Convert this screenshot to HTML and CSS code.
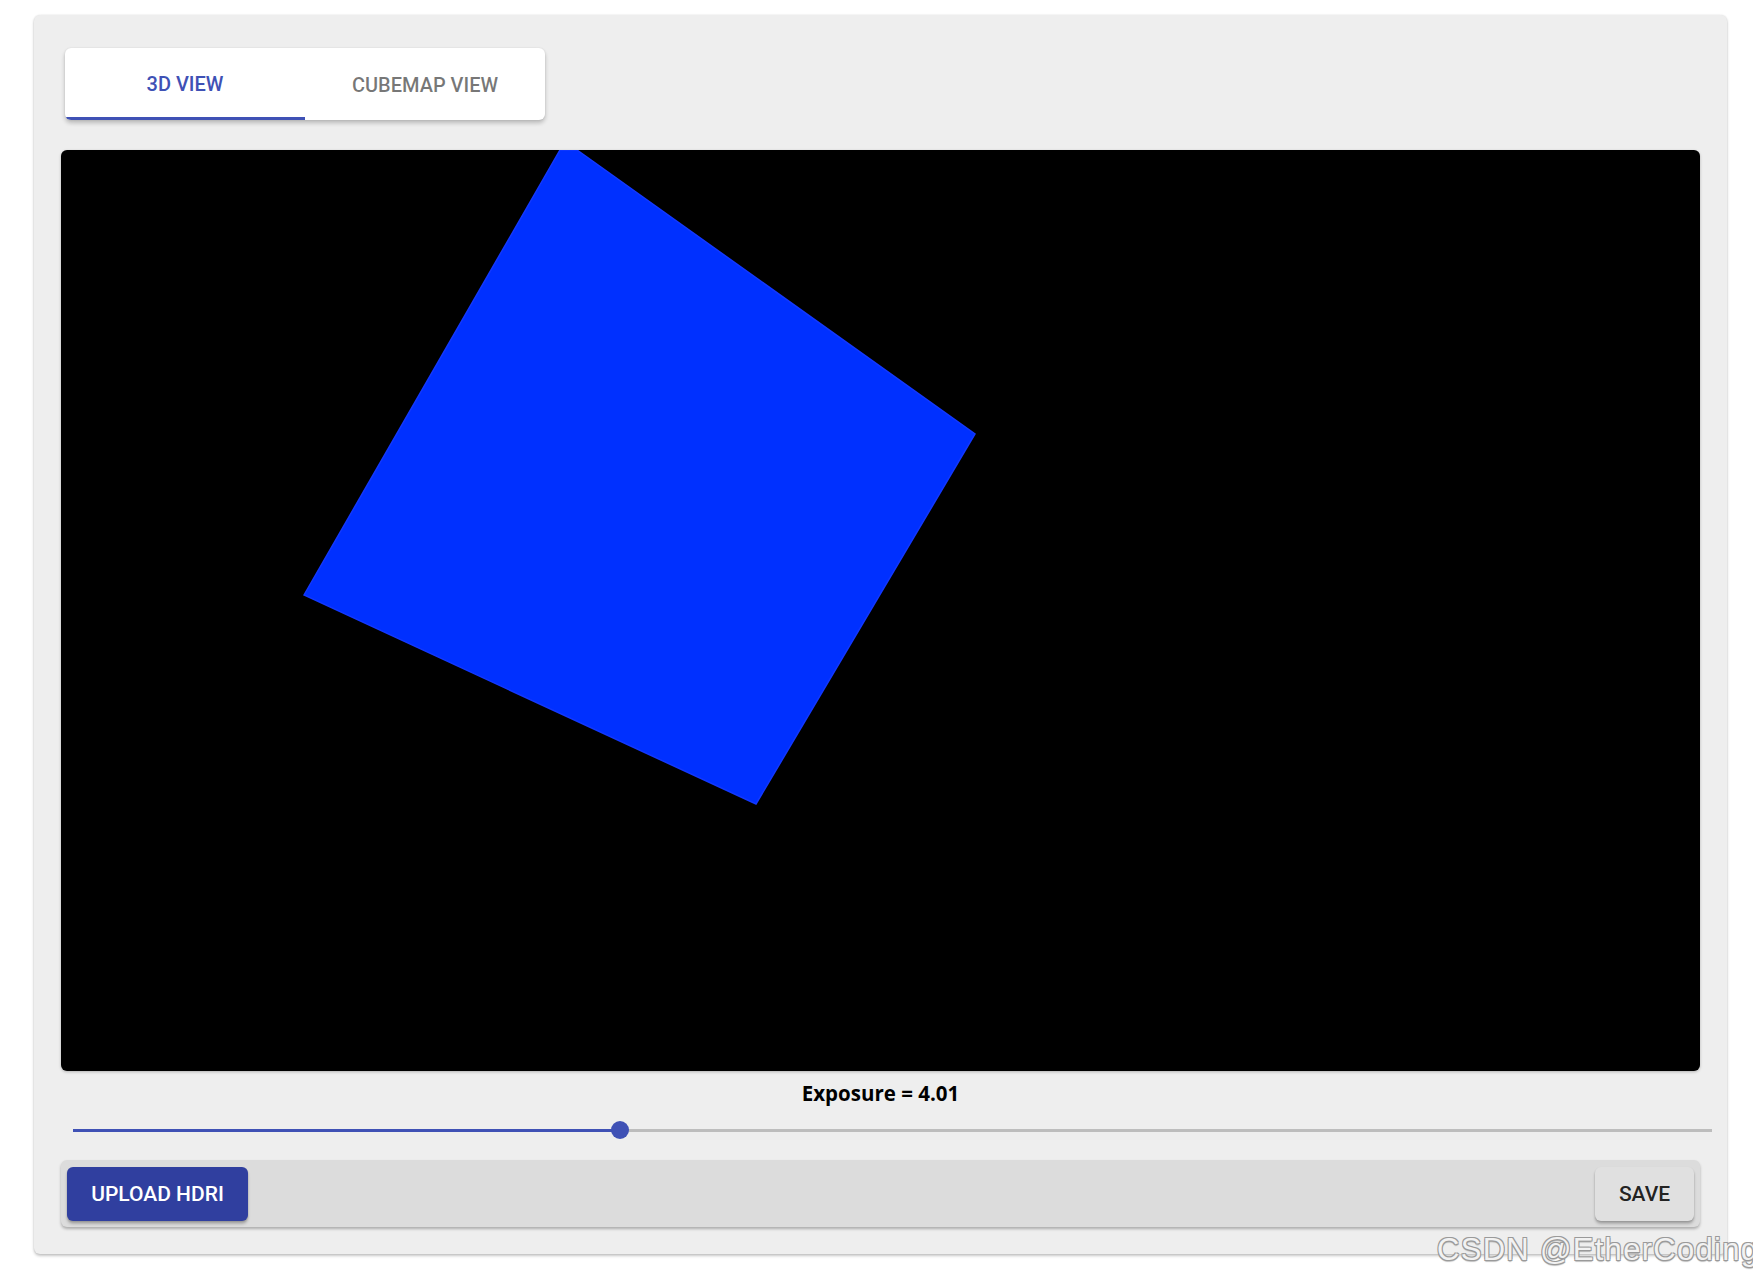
FILE: index.html
```html
<!DOCTYPE html>
<html lang="en">
<head>
<meta charset="utf-8">
<title>HDRI Viewer</title>
<link rel="stylesheet" href="styles.css">
</head>
<body>
<div class="page">
  <div class="card">
    <div class="tabs">
      <div class="tab tab-active">3D VIEW</div>
      <div class="tab">CUBEMAP VIEW</div>
    </div>
    <div class="viewport">
      <svg class="scene" viewBox="0 0 1639 921" preserveAspectRatio="none" xmlns="http://www.w3.org/2000/svg">
        <polygon points="243,445 499,0 516,0 914,284 695,654" fill="#0030ff" stroke="#1238ff" stroke-width="1.5"/>
      </svg>
    </div>
    <div class="exposure">Exposure = 4.01</div>
    <div class="slider">
      <div class="track">
        <div class="track-fill" style="width: 33.4%"></div>
        <div class="thumb" style="left: 33.4%"></div>
      </div>
    </div>
    <div class="toolbar">
      <button class="btn btn-primary">UPLOAD HDRI</button>
      <button class="btn btn-default">SAVE</button>
    </div>
  </div>
</div>
<div class="watermark">CSDN @EtherCoding</div>
</body>
</html>
```
FILE: styles.css
```css
html, body {
  margin: 0;
  padding: 0;
  background: #ffffff;
}
body {
  width: 1753px;
  height: 1280px;
  overflow: hidden;
  position: relative;
  font-family: Roboto, "Liberation Sans", sans-serif;
}
.page {
  padding: 15px 26px 0 34px;
}
.card {
  height: 1239px;
  box-sizing: border-box;
  background: #eeeeee;
  border-radius: 6px;
  box-shadow: 0 2px 3px rgba(0,0,0,0.22), 0 0 2px rgba(0,0,0,0.12);
  padding: 33px 27px 27px 27px;
  display: flex;
  flex-direction: column;
}
.tabs {
  display: flex;
  width: 480px;
  height: 72px;
  margin-left: 4px;
  margin-bottom: 30px;
  background: #ffffff;
  border-radius: 6px;
  overflow: hidden;
  box-shadow: 0 3px 4px rgba(0,0,0,0.22), 0 0 2px rgba(0,0,0,0.1);
}
.tab {
  width: 240px;
  height: 72px;
  box-sizing: border-box;
  display: flex;
  align-items: center;
  justify-content: center;
  font-family: Roboto, sans-serif;
  font-weight: 500;
  font-size: 20px;
  color: rgba(0,0,0,0.54);
  padding-top: 2px;
}
.tab-active {
  color: #3f51b5;
  border-bottom: 3px solid #3f51b5;
  padding-top: 3px;
}
.viewport {
  height: 921px;
  background: #000000;
  border-radius: 6px;
  overflow: hidden;
  box-shadow: 0 1px 3px rgba(0,0,0,0.25);
}
.scene {
  display: block;
  width: 100%;
  height: 100%;
}
.exposure {
  height: 44px;
  line-height: 44px;
  text-align: center;
  font-family: "Open Sans", sans-serif;
  font-weight: 700;
  font-size: 20.5px;
  color: #000000;
}
.slider {
  height: 30px;
  margin: 0 -12px 0 12px;
  display: flex;
  align-items: center;
}
.track {
  position: relative;
  width: 100%;
  height: 3px;
  background: #bdbdbd;
}
.track-fill {
  height: 3px;
  background: #3f51b5;
}
.thumb {
  position: absolute;
  top: -7.5px;
  width: 18px;
  height: 18px;
  margin-left: -9px;
  border-radius: 50%;
  background: #3f51b5;
}
.toolbar {
  margin-top: 15px;
  height: 67px;
  box-sizing: border-box;
  padding: 7px 6px 6px 6px;
  background: #dcdcdc;
  border-radius: 6px;
  box-shadow: 0 2px 3px rgba(0,0,0,0.28);
  display: flex;
  justify-content: space-between;
  align-items: flex-start;
}
.btn {
  height: 54px;
  border: none;
  border-radius: 6px;
  font-family: Roboto, sans-serif;
  font-weight: 500;
  font-size: 21px;
  padding: 0;
  cursor: pointer;
  box-shadow: 0 3px 3px rgba(0,0,0,0.22), 0 1px 2px rgba(0,0,0,0.14);
}
.btn-primary {
  width: 181px;
  background: #303f9f;
  color: #ffffff;
}
.btn-default {
  width: 99px;
  background: #e0e0e0;
  color: rgba(0,0,0,0.87);
}
.watermark {
  position: absolute;
  left: 1437px;
  top: 1234px;
  font-family: "Liberation Sans", Arial, sans-serif;
  font-size: 31px;
  line-height: 31px;
  letter-spacing: 1.3px;
  white-space: nowrap;
  color: #f2f2f2;
  text-shadow: 1px 1px 0 #9a9a9a, -1px -1px 0 #9a9a9a, 1px -1px 0 #9a9a9a, -1px 1px 0 #9a9a9a, 0 2px 1px rgba(0,0,0,0.25);
}
```
